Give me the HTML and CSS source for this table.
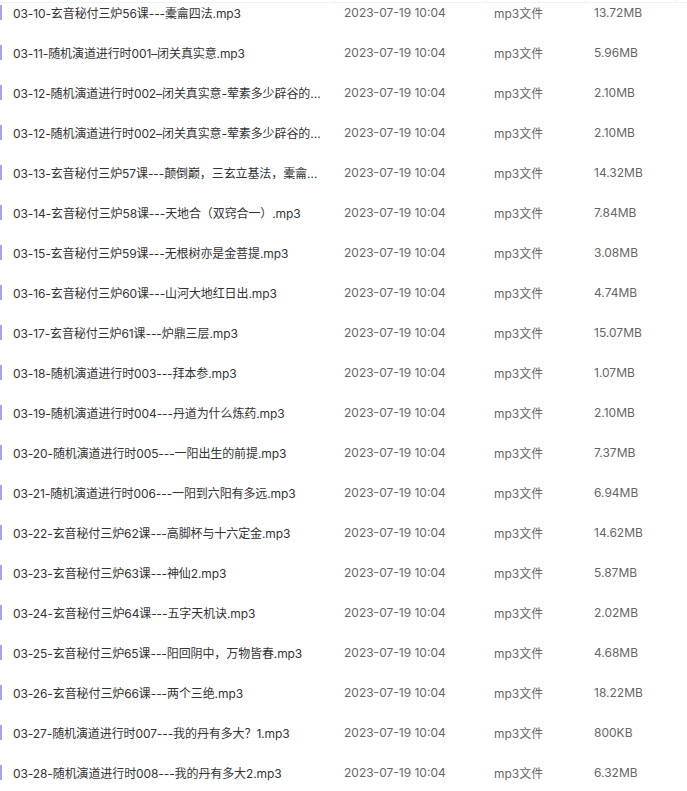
FILE: index.html
```html
<!DOCTYPE html>
<html lang="zh-CN">
<head>
    <meta charset="UTF-8">
    <meta name="viewport" content="width=device-width, initial-scale=1.0">
    <title>文件列表</title>
    <link rel="stylesheet" href="styles.css">
</head>
<body>
    <div class="file-list">
        <!-- 表头只露出一条边 -->
        <div class="head">
            <div class="head-name"></div>
            <div class="head-date"></div>
            <div class="head-type"></div>
            <div class="head-size"></div>
        </div>

        <div class="row"><span class="mark"></span><span class="name">03-10-玄音秘付三炉56课---橐龠四法.mp3</span><span class="date">2023-07-19 10:04</span><span class="type">mp3文件</span><span class="size">13.72MB</span></div>
        <div class="row"><span class="mark"></span><span class="name">03-11-随机演道进行时001–闭关真实意.mp3</span><span class="date">2023-07-19 10:04</span><span class="type">mp3文件</span><span class="size">5.96MB</span></div>
        <div class="row"><span class="mark"></span><span class="name">03-12-随机演道进行时002–闭关真实意-荤素多少辟谷的问题.mp3</span><span class="date">2023-07-19 10:04</span><span class="type">mp3文件</span><span class="size">2.10MB</span></div>
        <div class="row"><span class="mark"></span><span class="name">03-12-随机演道进行时002–闭关真实意-荤素多少辟谷的问题(1).mp3</span><span class="date">2023-07-19 10:04</span><span class="type">mp3文件</span><span class="size">2.10MB</span></div>
        <div class="row"><span class="mark"></span><span class="name">03-13-玄音秘付三炉57课---颠倒巅，三玄立基法，橐龠之用.mp3</span><span class="date">2023-07-19 10:04</span><span class="type">mp3文件</span><span class="size">14.32MB</span></div>
        <div class="row"><span class="mark"></span><span class="name">03-14-玄音秘付三炉58课---天地合（双窍合一）.mp3</span><span class="date">2023-07-19 10:04</span><span class="type">mp3文件</span><span class="size">7.84MB</span></div>
        <div class="row"><span class="mark"></span><span class="name">03-15-玄音秘付三炉59课---无根树亦是金菩提.mp3</span><span class="date">2023-07-19 10:04</span><span class="type">mp3文件</span><span class="size">3.08MB</span></div>
        <div class="row"><span class="mark"></span><span class="name">03-16-玄音秘付三炉60课---山河大地红日出.mp3</span><span class="date">2023-07-19 10:04</span><span class="type">mp3文件</span><span class="size">4.74MB</span></div>
        <div class="row"><span class="mark"></span><span class="name">03-17-玄音秘付三炉61课---炉鼎三层.mp3</span><span class="date">2023-07-19 10:04</span><span class="type">mp3文件</span><span class="size">15.07MB</span></div>
        <div class="row"><span class="mark"></span><span class="name">03-18-随机演道进行时003---拜本参.mp3</span><span class="date">2023-07-19 10:04</span><span class="type">mp3文件</span><span class="size">1.07MB</span></div>
        <div class="row"><span class="mark"></span><span class="name">03-19-随机演道进行时004---丹道为什么炼药.mp3</span><span class="date">2023-07-19 10:04</span><span class="type">mp3文件</span><span class="size">2.10MB</span></div>
        <div class="row"><span class="mark"></span><span class="name">03-20-随机演道进行时005---一阳出生的前提.mp3</span><span class="date">2023-07-19 10:04</span><span class="type">mp3文件</span><span class="size">7.37MB</span></div>
        <div class="row"><span class="mark"></span><span class="name">03-21-随机演道进行时006---一阳到六阳有多远.mp3</span><span class="date">2023-07-19 10:04</span><span class="type">mp3文件</span><span class="size">6.94MB</span></div>
        <div class="row"><span class="mark"></span><span class="name">03-22-玄音秘付三炉62课---高脚杯与十六定金.mp3</span><span class="date">2023-07-19 10:04</span><span class="type">mp3文件</span><span class="size">14.62MB</span></div>
        <div class="row"><span class="mark"></span><span class="name">03-23-玄音秘付三炉63课---神仙2.mp3</span><span class="date">2023-07-19 10:04</span><span class="type">mp3文件</span><span class="size">5.87MB</span></div>
        <div class="row"><span class="mark"></span><span class="name">03-24-玄音秘付三炉64课---五字天机诀.mp3</span><span class="date">2023-07-19 10:04</span><span class="type">mp3文件</span><span class="size">2.02MB</span></div>
        <div class="row"><span class="mark"></span><span class="name">03-25-玄音秘付三炉65课---阳回阴中，万物皆春.mp3</span><span class="date">2023-07-19 10:04</span><span class="type">mp3文件</span><span class="size">4.68MB</span></div>
        <div class="row"><span class="mark"></span><span class="name">03-26-玄音秘付三炉66课---两个三绝.mp3</span><span class="date">2023-07-19 10:04</span><span class="type">mp3文件</span><span class="size">18.22MB</span></div>
        <div class="row"><span class="mark"></span><span class="name">03-27-随机演道进行时007---我的丹有多大？1.mp3</span><span class="date">2023-07-19 10:04</span><span class="type">mp3文件</span><span class="size">800KB</span></div>
        <div class="row"><span class="mark"></span><span class="name">03-28-随机演道进行时008---我的丹有多大2.mp3</span><span class="date">2023-07-19 10:04</span><span class="type">mp3文件</span><span class="size">6.32MB</span></div>
    </div>
</body>
</html>
```

FILE: styles.css
```css
body {
    margin: 0;
    background: #fff;
    font-family: Inter, "Noto Sans CJK SC", sans-serif;
    font-size: 12px;
    color: #666;
}
.file-list {
    width: 687px;
    overflow: hidden;
}
.head {
    display: flex;
    height: 2px;
    border-bottom: 1px solid #f2f2f2;
}
.head div {
    border-right: 1px solid #f2f2f2;
}
.head-name {
    width: 334px;
}
.head-date {
    width: 150px;
}
.head-type {
    width: 99px;
}
.head-size {
    width: 89px;
}
.row {
    display: flex;
    align-items: center;
    height: 18px;
    padding-bottom: 22px;
    white-space: nowrap;
}
.mark {
    width: 2px;
    height: 15px;
    margin-right: 11px;
    background-color: #a3a6f4;
    flex-shrink: 0;
}
.name {
    width: 314px;
    margin-right: 17px;
    overflow: hidden;
    text-overflow: ellipsis;
    letter-spacing: -0.1px;
    color: #333;
}
.date {
    width: 150px;
}
.type {
    width: 100px;
}
.size {
    width: 80px;
}
```
